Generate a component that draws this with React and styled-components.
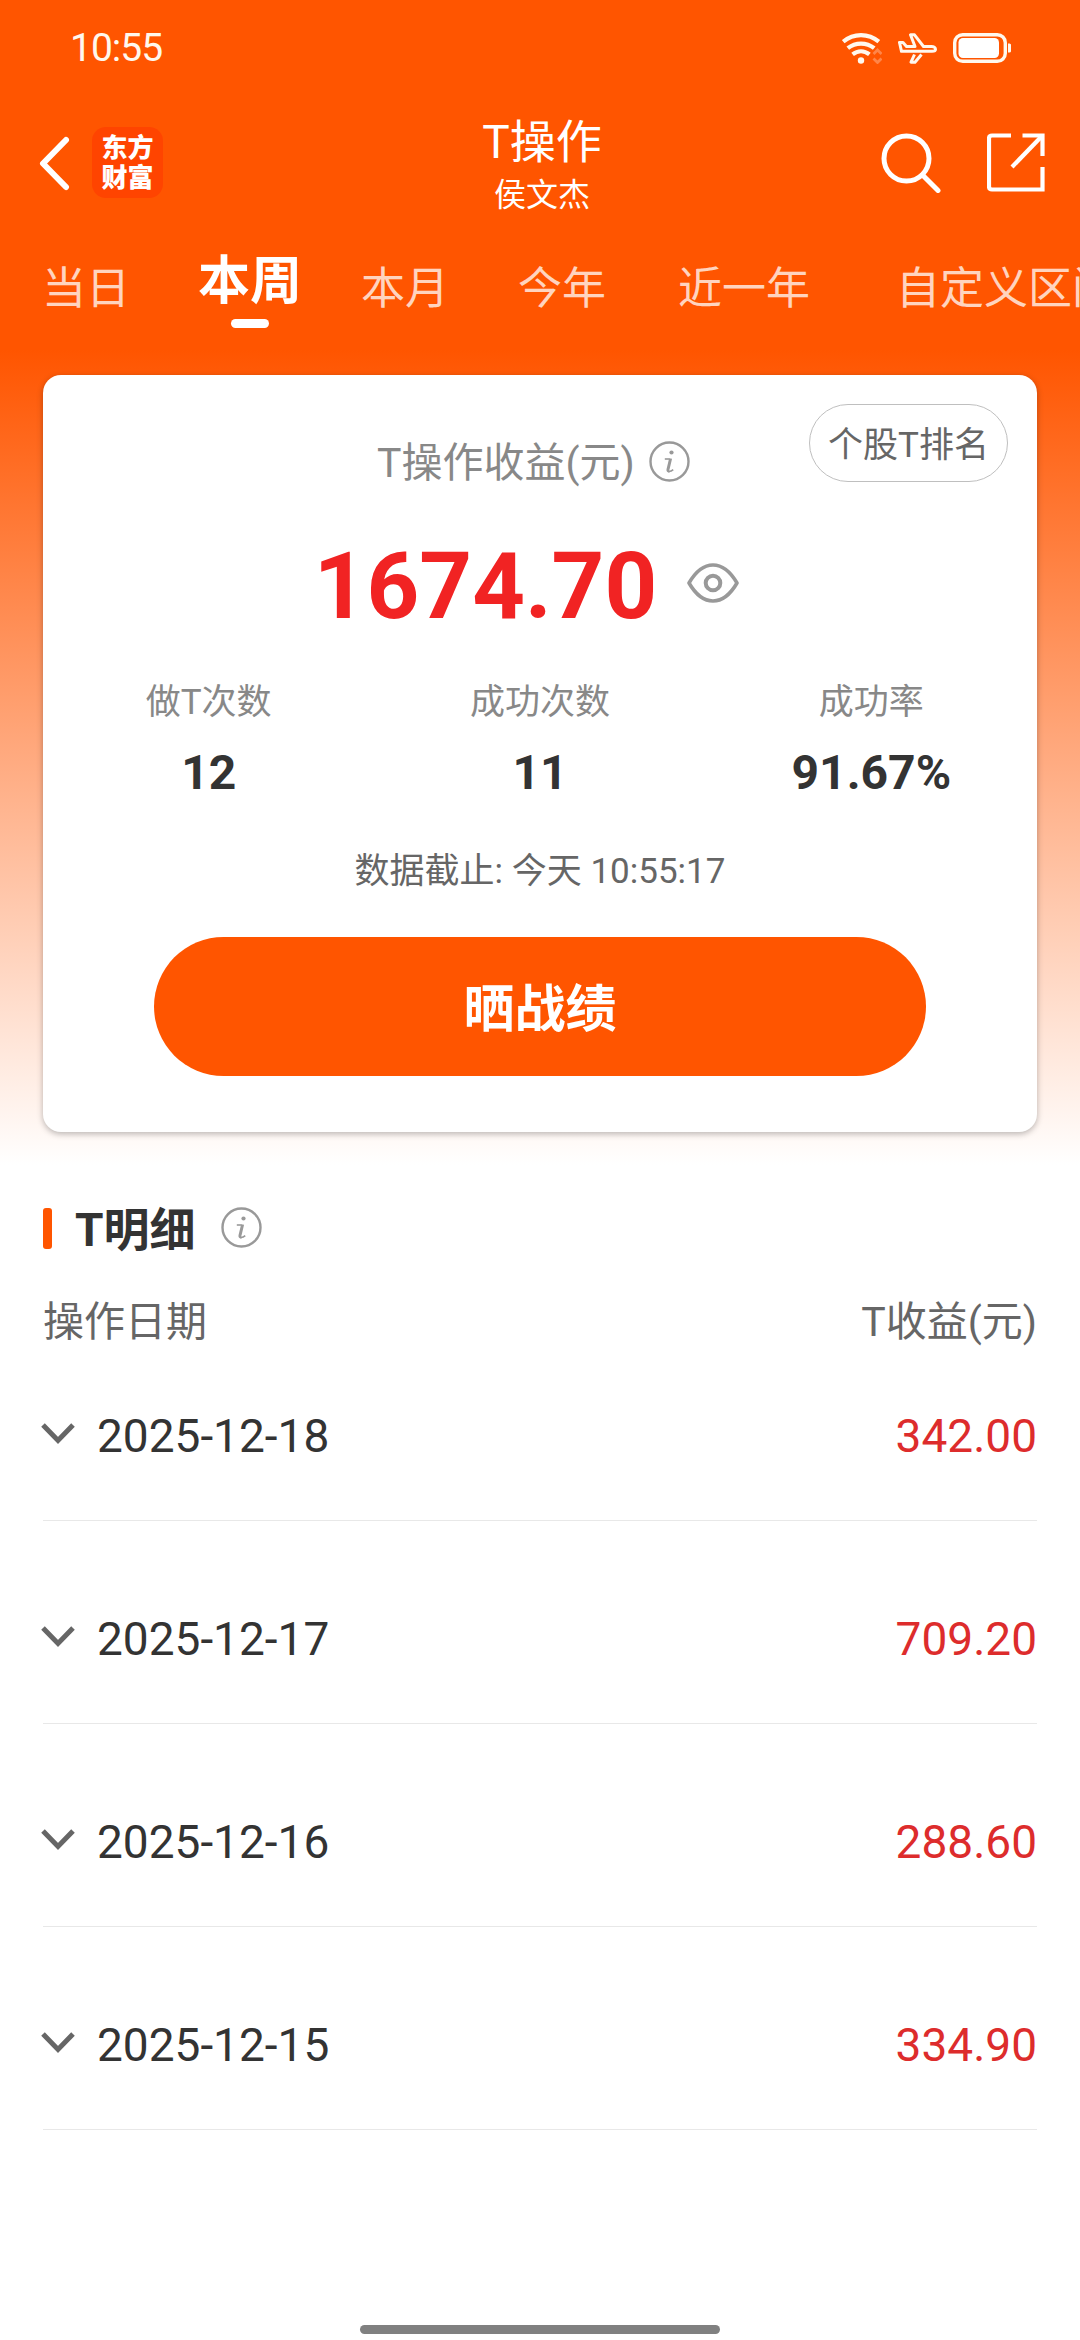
import styled, { createGlobalStyle, css } from 'styled-components';

const GlobalStyle = createGlobalStyle`
	* {
		box-sizing: border-box;
	}

	body {
		margin: 0;
		background: #fff;
		color: #333;
		font-family: Roboto, 'Noto Sans CJK SC', sans-serif;
	}

	svg {
		display: block;
		flex: none;
	}

	button {
		font-family: inherit;
		cursor: pointer;
	}
`;

const Page = styled.div`
	display: flex;
	flex-direction: column;
	height: 2340px;
	overflow: hidden;
	background: linear-gradient(to bottom, #ff5500 350px, #fff 1165px);
`;

const StatusBar = styled.div`
	display: flex;
	align-items: center;
	justify-content: space-between;
	height: 96px;
	padding: 0 68px 0 70px;
	color: #fff8ee;
`;

const Time = styled.span`
	font-size: 39px;
	line-height: 48px;
	letter-spacing: -1px;
`;

const StatusIcons = styled.div`
	display: flex;
	align-items: center;
	gap: 16px;
`;

const Header = styled.header`
	display: grid;
	grid-template-columns: 1fr auto 1fr;
	align-items: center;
	height: 133px;
	padding: 0 35px 0 39px;
	color: #fff;
`;

const HeaderLeft = styled.div`
	display: flex;
	align-items: center;
	gap: 22px;
`;

const HeaderRight = styled.div`
	display: flex;
	align-items: center;
	justify-content: flex-end;
	gap: 46px;
`;

const Logo = styled.div`
	display: flex;
	flex-direction: column;
	justify-content: center;
	width: 71px;
	height: 71px;
	border-radius: 14px;
	background: #ff4400;
	font-size: 26px;
	font-weight: 900;
	line-height: 30px;
	text-align: center;
`;

const TitleBlock = styled.div`
	align-self: start;
	margin-top: 18px;
	text-align: center;
`;

const Title = styled.h1`
	margin: 0;
	font-size: 46px;
	font-weight: 400;
	line-height: 57px;
`;

const Subtitle = styled.div`
	font-size: 32px;
	line-height: 49px;
`;

const Tabs = styled.nav`
	display: flex;
	height: 146px;
	padding-left: 8px;
	overflow: hidden;
`;

const Tab = styled.div`
	display: flex;
	flex: none;
	flex-direction: column;
	align-items: center;
	width: ${({ $width }) => $width}px;
	padding-top: 27px;
	color: rgba(255, 255, 255, 0.75);
	font-size: 44px;
	line-height: 66px;
	white-space: nowrap;

	${({ $active }) =>
		$active &&
		css`
			padding-top: 20px;
			color: #fff;
			font-size: 52px;
			font-weight: 700;

			&::after {
				content: '';
				width: 38px;
				height: 9px;
				margin-top: 4px;
				border-radius: 5px;
				background: #fff;
			}
		`}
`;

const Card = styled.section`
	margin: 0 43px;
	padding: 29px 0 56px;
	border-radius: 18px;
	background: #fff;
	box-shadow: 0 2px 6px rgba(0, 0, 0, 0.28);
`;

const CardHeader = styled.div`
	display: grid;
	grid-template-columns: 1fr auto 1fr;
	align-items: start;
	height: 89px;
`;

const CardTitle = styled.div`
	display: flex;
	grid-column: 2;
	align-items: center;
	gap: 14px;
	padding: 29px 13px 0 0;
	color: #888;
	font-size: 41px;
	line-height: 60px;

	svg {
		margin-bottom: 3px;
	}
`;

const RankButton = styled.button`
	justify-self: end;
	width: 199px;
	height: 78px;
	margin-right: 29px;
	padding: 6px 0 0;
	border: 1px solid #bfbfbf;
	border-radius: 39px;
	background: transparent;
	color: #666;
	font-size: 35px;
	line-height: 70px;
`;

const Amount = styled.div`
	display: flex;
	align-items: center;
	justify-content: center;
	gap: 30px;
	margin-top: 44px;
	padding-right: 27px;
	color: #f12323;
	font-size: 92px;
	font-weight: 700;
	line-height: 100px;

	svg {
		margin-bottom: 9px;
	}
`;

const Stats = styled.div`
	display: grid;
	grid-template-columns: repeat(3, 1fr);
	margin-top: 41px;
	text-align: center;
`;

const StatLabel = styled.div`
	color: #888;
	font-size: 35px;
	line-height: 50px;
`;

const StatValue = styled.div`
	margin-top: 15px;
	font-size: 48px;
	font-weight: 700;
	line-height: 60px;
`;

const Deadline = styled.div`
	margin-top: 44px;
	color: #666;
	font-size: 35px;
	line-height: 50px;
	text-align: center;
`;

const ShareButton = styled.button`
	display: block;
	width: 772px;
	height: 139px;
	margin: 40px auto 0;
	padding: 7px 0 0;
	border: none;
	border-radius: 70px;
	background: #ff5500;
	color: #fff;
	font-size: 51px;
	font-weight: 700;
	line-height: 132px;
`;

const Details = styled.section`
	margin: 66px 43px 0;
`;

const SectionTitle = styled.h2`
	display: flex;
	align-items: center;
	height: 60px;
	margin: 0;
	font-size: 46px;
	font-weight: 700;

	&::before {
		content: '';
		width: 9px;
		height: 41px;
		margin-right: 23px;
		border-radius: 3px;
		background: #ff5500;
	}

	span {
		padding-top: 3px;
		line-height: 60px;
	}

	svg {
		margin: 0 0 2px 25px;
	}
`;

const ListHead = styled.div`
	display: flex;
	justify-content: space-between;
	margin-top: 34px;
	color: #666;
	font-size: 41px;
	line-height: 60px;
`;

const List = styled.ul`
	display: flex;
	flex-direction: column;
	gap: 34px;
	margin: 0;
	padding: 0;
	list-style: none;
`;

const Row = styled.li`
	display: flex;
	align-items: center;
	padding: 51px 0 50px;
	border-bottom: 1px solid #e8e8e8;
	font-size: 46px;
	line-height: 67px;
`;

const RowDate = styled.span`
	flex: 1;
	margin-left: 22px;
`;

const RowProfit = styled.span`
	color: #dd2c2c;
`;

const HomeIndicator = styled.div`
	width: 360px;
	height: 9px;
	margin: auto auto 6px;
	border-radius: 5px;
	background: #808080;
`;

const tabs = [
	{ name: '当日', width: 156 },
	{ name: '本周', width: 172 },
	{ name: '本月', width: 138 },
	{ name: '今年', width: 176 },
	{ name: '近一年', width: 188 },
	{ name: '自定义区间', width: 336 },
];

const stats = [
	{ label: '做T次数', value: '12' },
	{ label: '成功次数', value: '11' },
	{ label: '成功率', value: '91.67%' },
];

const records = [
	{ date: '2025-12-18', profit: '342.00' },
	{ date: '2025-12-17', profit: '709.20' },
	{ date: '2025-12-16', profit: '288.60' },
	{ date: '2025-12-15', profit: '334.90' },
];

function WifiIcon() {
	return (
		<svg width='40' height='31' viewBox='0 0 40 31' fill='none' stroke='currentColor' strokeWidth='4.2'>
			<path d='M1.2 8.7C11.5-.1 26.5-.1 36.8 8.7' />
			<path d='M5.8 15.2C13.5 9 24.5 9 32.2 15.2' />
			<path d='M10.6 21.3C15.8 17.2 22.2 17.2 27.4 21.3' />
			<circle cx='19' cy='27.5' r='3.2' fill='currentColor' stroke='none' />
			<g stroke='#ff8548' strokeWidth='2.8'>
				<path d='M31.5 21L35.5 17L39.5 21' />
				<path d='M31.5 25.5L35.5 29.5L39.5 25.5' />
			</g>
		</svg>
	);
}

function PlaneIcon() {
	return (
		<svg
			width='39'
			height='31'
			viewBox='0 0 39 31'
			fill='none'
			stroke='currentColor'
			strokeWidth='3'
			strokeLinejoin='round'
		>
			<path d='M1.5 9.5H5L8.5 13.5H17L12.5 1.8H16.5L25.5 13.5H33.5C35.8 13.5 37.5 14.8 37.5 16.2S36 18.3 34 18.3H3.5Z' />
			<path d='M16.5 21.5L13 29.2H17L23.5 21.5' />
		</svg>
	);
}

function BatteryIcon() {
	return (
		<svg width='59' height='30' viewBox='0 0 59 30' fill='none'>
			<rect x='1.7' y='1.7' width='50.6' height='26.6' rx='8' stroke='currentColor' strokeWidth='3.4' />
			<rect x='5.5' y='5' width='40.5' height='20' rx='4.5' fill='#fff' />
			<path d='M55 10.5C57.5 10.5 58 11 58 12V18C58 19 57.5 19.5 55 19.5Z' fill='currentColor' />
		</svg>
	);
}

function BackIcon() {
	return (
		<svg width='31' height='56' viewBox='0 0 31 56' fill='none' stroke='currentColor' strokeWidth='6'>
			<path d='M27 5L4 28.5L27 52' strokeLinecap='round' strokeLinejoin='round' />
		</svg>
	);
}

function SearchIcon() {
	return (
		<svg width='60' height='60' viewBox='0 0 60 60' fill='none' stroke='currentColor' strokeWidth='5'>
			<circle cx='25.5' cy='25.5' r='22.5' />
			<path d='M41.5 42L57 57.5' strokeLinecap='round' />
		</svg>
	);
}

function ExportIcon() {
	return (
		<svg width='58' height='60' viewBox='0 0 58 60' fill='none' stroke='currentColor' strokeWidth='4.2'>
			<path d='M24 2.5H5Q2 2.5 2 5.5V53.5Q2 56.5 5 56.5H55.5V34' />
			<path d='M35.5 2.5H55.5V23' />
			<path d='M54.5 3.5L25 34' />
		</svg>
	);
}

function InfoIcon() {
	return (
		<svg width='41' height='41' viewBox='0 0 41 41' fill='none' stroke='#999' strokeWidth='2.4'>
			<circle cx='20.5' cy='20.5' r='19' />
			<circle cx='22.5' cy='11.5' r='2.1' fill='#999' stroke='none' />
			<path d='M15.8 18H20.5' strokeWidth='1.6' />
			<path d='M21.6 17.5L19 28.5Q18.7 30.4 20.4 30.1' strokeWidth='3' />
			<path d='M19.5 30.5Q22.5 30.4 24.2 28.6' strokeWidth='1.6' />
		</svg>
	);
}

function EyeIcon() {
	return (
		<svg width='52' height='40' viewBox='0 0 52 40' fill='none' stroke='#999' strokeWidth='3.6'>
			<path d='M2 20C16-4 36-4 50 20C36 44 16 44 2 20Z' strokeLinejoin='round' />
			<circle cx='26' cy='20' r='7.3' strokeWidth='4' />
		</svg>
	);
}

function ArrowDownIcon() {
	return (
		<svg width='34' height='22' viewBox='0 0 34 22' fill='none' stroke='#666' strokeWidth='5'>
			<path d='M2 2L17 17.5L32 2' />
		</svg>
	);
}

const ArrowButton = styled.span`
	margin-left: -2px;
	padding-bottom: 5px;
`;

function Record({ date, profit }) {
	return (
		<Row>
			<ArrowButton>
				<ArrowDownIcon />
			</ArrowButton>
			<RowDate>{date}</RowDate>
			<RowProfit>{profit}</RowProfit>
		</Row>
	);
}

function App() {
	return (
		<Page>
			<GlobalStyle />
			<StatusBar>
				<Time>10:55</Time>
				<StatusIcons>
					<WifiIcon />
					<PlaneIcon />
					<BatteryIcon />
				</StatusIcons>
			</StatusBar>
			<Header>
				<HeaderLeft>
					<BackIcon />
					<Logo>
						<span>东方</span>
						<span>财富</span>
					</Logo>
				</HeaderLeft>
				<TitleBlock>
					<Title>T操作</Title>
					<Subtitle>侯文杰</Subtitle>
				</TitleBlock>
				<HeaderRight>
					<SearchIcon />
					<ExportIcon />
				</HeaderRight>
			</Header>
			<Tabs>
				{tabs.map(({ name, width }) => (
					<Tab key={name} $width={width} $active={name === '本周'}>
						{name}
					</Tab>
				))}
			</Tabs>
			<Card>
				<CardHeader>
					<CardTitle>
						T操作收益(元)
						<InfoIcon />
					</CardTitle>
					<RankButton>个股T排名</RankButton>
				</CardHeader>
				<Amount>
					1674.70
					<EyeIcon />
				</Amount>
				<Stats>
					{stats.map(({ label, value }) => (
						<div key={label}>
							<StatLabel>{label}</StatLabel>
							<StatValue>{value}</StatValue>
						</div>
					))}
				</Stats>
				<Deadline>数据截止: 今天 10:55:17</Deadline>
				<ShareButton>晒战绩</ShareButton>
			</Card>
			<Details>
				<SectionTitle>
					<span>T明细</span>
					<InfoIcon />
				</SectionTitle>
				<ListHead>
					<span>操作日期</span>
					<span>T收益(元)</span>
				</ListHead>
				<List>
					{records.map((record) => (
						<Record key={record.date} {...record} />
					))}
				</List>
			</Details>
			<HomeIndicator />
		</Page>
	);
}

export default App;
